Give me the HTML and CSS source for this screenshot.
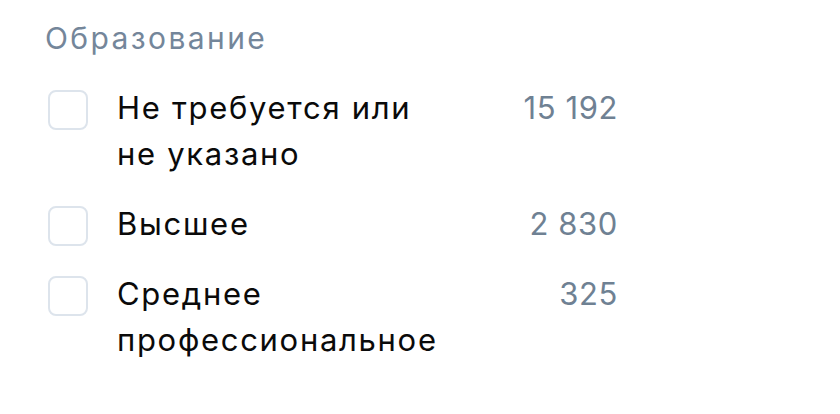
FILE: index.html
```html
<!DOCTYPE html>
<html lang="ru">
<head>
<meta charset="utf-8">
<title>Образование</title>
<link rel="stylesheet" href="styles.css">
</head>
<body>
<section class="filter">
  <h2 class="filter-title">Образование</h2>
  <ul class="filter-list">
    <li class="filter-item">
      <span class="checkbox"></span>
      <span class="label">Не требуется или не указано</span>
      <span class="count">15 192</span>
    </li>
    <li class="filter-item">
      <span class="checkbox"></span>
      <span class="label">Высшее</span>
      <span class="count">2 830</span>
    </li>
    <li class="filter-item">
      <span class="checkbox"></span>
      <span class="label">Среднее профессиональное</span>
      <span class="count">325</span>
    </li>
  </ul>
</section>
</body>
</html>
```
FILE: styles.css
```css
html, body {
  margin: 0;
  background: #ffffff;
}

body {
  font-family: Inter, "Noto Sans", sans-serif;
  color: #0a0a0a;
}

.filter {
  padding: 19px 0 0 45px;
  width: 572px;
}

.filter-title {
  margin: 0 0 28px;
  font-size: 30px;
  line-height: 38px;
  font-weight: 400;
  letter-spacing: 2.4px;
  color: #74869a;
}

.filter-list {
  list-style: none;
  margin: 0;
  padding: 0 0 0 3px;
  display: flex;
  flex-direction: column;
  gap: 24px;
}

.filter-item {
  display: flex;
  align-items: flex-start;
  font-size: 31px;
  line-height: 46px;
  letter-spacing: 1.7px;
}

.checkbox {
  flex: none;
  box-sizing: border-box;
  width: 40px;
  height: 40px;
  margin-top: 5px;
  border: 2px solid #dde4ec;
  border-radius: 8px;
}

.label {
  flex: none;
  width: 336px;
  margin-left: 29px;
}

.count {
  flex: 1;
  text-align: right;
  letter-spacing: 0.6px;
  margin-right: -1px;
  color: #6f8193;
}
```
